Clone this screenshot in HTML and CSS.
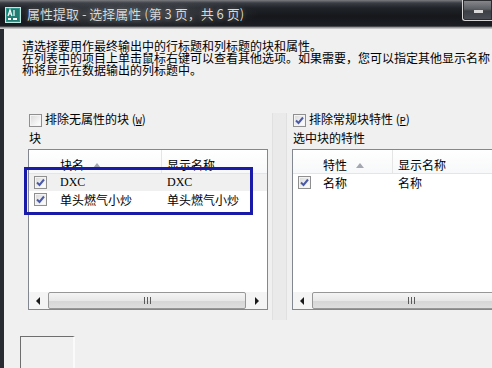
FILE: index.html
```html
<!DOCTYPE html>
<html lang="zh-CN">
<head>
<meta charset="utf-8">
<title>属性提取</title>
<link rel="stylesheet" href="styles.css">
</head>
<body>
<div class="window">
  <div class="titlebar">
    <svg class="app-icon" width="16" height="16" viewBox="0 0 16 16">
      <rect x="0.5" y="0.5" width="15" height="15" fill="#2e9a8e" stroke="#bfe9e3"/>
      <rect x="2" y="2" width="12" height="12" fill="#1f7d73"/>
      <path d="M3 9 L5 3 L7 9 M3.8 7 H6.2 M9 3 V9" stroke="#ffffff" stroke-width="1.2" fill="none"/>
      <rect x="3" y="11" width="3" height="2" fill="#ffffff"/>
      <rect x="8" y="11" width="4" height="2" fill="#ffffff"/>
    </svg>
    <span class="title">属性提取 - 选择属性 (第 3 页，共 6 页)</span>
    <div class="tb-btn"><span class="tb-glyph"></span></div>
  </div>
  <div class="client">
    <div class="intro">
      <div class="line">请选择要用作最终输出中的行标题和列标题的块和属性。</div>
      <div class="line">在列表中的项目上单击鼠标右键可以查看其他选项。如果需要，您可以指定其他显示名称</div>
      <div class="line">称将显示在数据输出的列标题中。</div>
    </div>

    <div class="panes">
      <div class="pane pane-left">
        <div class="chk-row"><span class="cb"></span><span>排除无属性的块 (<u class="acc">W</u>)</span></div>
        <div class="group-label">块</div>
        <div class="list list-left">
          <div class="list-head">
            <div class="hcol hcol-1">块名<span class="sort"></span></div>
            <div class="hcol hcol-2">显示名称</div>
          </div>
          <div class="list-body">
            <div class="row row-sel">
              <span class="cb checked"><svg width="11" height="11" viewBox="0 0 11 11"><path d="M2 5.5 L4.5 8 L9 2.5" stroke="#4a5aa8" stroke-width="2" fill="none"/></svg></span>
              <span class="cell cell-1 latin">DXC</span>
              <span class="cell latin">DXC</span>
            </div>
            <div class="row">
              <span class="cb checked"><svg width="11" height="11" viewBox="0 0 11 11"><path d="M2 5.5 L4.5 8 L9 2.5" stroke="#4a5aa8" stroke-width="2" fill="none"/></svg></span>
              <span class="cell cell-1">单头燃气小炒</span>
              <span class="cell">单头燃气小炒</span>
            </div>
          </div>
          <div class="hscroll">
            <div class="arrow-btn"><span class="tri-left"></span></div>
            <div class="thumb thumb-left"><span class="grip"></span></div>
            <div class="arrow-btn arrow-right"><span class="tri-right"></span></div>
          </div>
        </div>
        <div class="highlight"></div>
      </div>

      <div class="splitter"></div>

      <div class="pane pane-right">
        <div class="chk-row"><span class="cb checked"><svg width="11" height="11" viewBox="0 0 11 11"><path d="M2 5.5 L4.5 8 L9 2.5" stroke="#4a5aa8" stroke-width="2" fill="none"/></svg></span><span>排除常规块特性 (<u class="acc">P</u>)</span></div>
        <div class="group-label">选中块的特性</div>
        <div class="list list-right">
          <div class="list-head">
            <div class="hcol hcol-1">特性<span class="sort"></span></div>
            <div class="hcol hcol-2">显示名称</div>
          </div>
          <div class="list-body">
            <div class="row">
              <span class="cb checked"><svg width="11" height="11" viewBox="0 0 11 11"><path d="M2 5.5 L4.5 8 L9 2.5" stroke="#4a5aa8" stroke-width="2" fill="none"/></svg></span>
              <span class="cell cell-1">名称</span>
              <span class="cell">名称</span>
            </div>
          </div>
          <div class="hscroll">
            <div class="arrow-btn"><span class="tri-left"></span></div>
            <div class="thumb thumb-right"><span class="grip"></span></div>
          </div>
        </div>
      </div>
    </div>

    <div class="bottom">
      <div class="preview"></div>
    </div>
  </div>
</div>
</body>
</html>
```

FILE: styles.css
```css
* { box-sizing: border-box; }

html, body {
  margin: 0;
  padding: 0;
  width: 492px;
  height: 368px;
  overflow: hidden;
  background: #f0f0f0;
  font-family: "Noto Sans CJK SC", "Liberation Sans", sans-serif;
  font-size: 12px;
  color: #000;
}

.window {
  width: 492px;
  height: 368px;
  display: flex;
  flex-direction: column;
  overflow: hidden;
}

/* ---------- title bar ---------- */
.titlebar {
  height: 29px;
  flex: none;
  display: flex;
  align-items: flex-start;
  padding-left: 5px;
  background:
    radial-gradient(ellipse 130px 14px at 130px 14px, rgba(120,124,130,0.5), rgba(120,124,130,0) 100%),
    linear-gradient(#7a7c80 0px, #3a3d43 3px, #202328 8px, #15171b 16px, #1b1e23 26px, #c4c4c4 28px, #c4c4c4 29px);
}

.app-icon {
  margin-top: 7px;
  flex: none;
}

.title {
  margin-left: 6px;
  margin-top: 6px;
  font-size: 13px;
  line-height: 16px;
  color: #d9d9d9;
  white-space: nowrap;
  text-shadow: 0 0 4px rgba(255,255,255,0.35), 0 0 1px #000;
}

.tb-btn {
  margin-left: auto;
  width: 30px;
  height: 21px;
  flex: none;
  border: 1px solid #d6d6d6;
  border-right: none;
  border-top: none;
  border-radius: 0 0 0 3px;
  background: linear-gradient(#8a8c90, #5c5f64 45%, #3c3f45 55%, #4b4e54);
  box-shadow: inset 0 0 0 1px #2a2c30;
  display: flex;
  align-items: center;
  justify-content: center;
}

.tb-glyph {
  width: 9px;
  height: 3px;
  background: #d8d8d8;
  margin-left: 2px;
  margin-top: 3px;
}

/* ---------- client ---------- */
.client {
  flex: 1;
  border-left: 4px solid #282c32;
  background: #f0f0f0;
  display: flex;
  flex-direction: column;
}

.intro {
  margin-top: 11px;
  padding-left: 18px;
}

.line {
  height: 12px;
  line-height: 12px;
  white-space: nowrap;
}

.panes {
  margin-top: 37px;
  display: flex;
  align-items: flex-start;
}

.pane {
  position: relative;
  flex: none;
  display: flex;
  flex-direction: column;
}

.pane-left {
  margin-left: 24px;
  width: 240px;
}

.pane-right {
  width: 220px;
}

.splitter {
  flex: none;
  width: 24px;
  height: 207px;
  background:
    linear-gradient(90deg,
      transparent 0, transparent 4px,
      #e0e0e0 4px, #e0e0e0 5px,
      #eaeaea 5px, #eaeaea 18px,
      #e0e0e0 18px, #e0e0e0 19px,
      transparent 19px);
}

.chk-row {
  height: 14px;
  line-height: 14px;
  display: flex;
  align-items: center;
  gap: 3px;
  padding-left: 1px;
  white-space: nowrap;
}

.acc {
  font-family: "Liberation Mono", monospace;
  font-size: 10px;
}

.group-label {
  margin-top: 4px;
  height: 14px;
  line-height: 14px;
  padding-left: 1px;
  white-space: nowrap;
}

/* checkbox */
.cb {
  flex: none;
  width: 13px;
  height: 13px;
  border: 1px solid #8f8f8f;
  background: linear-gradient(135deg, #d8d8d8, #f6f6f6 70%, #ffffff);
  box-shadow: inset 0 0 0 1px #f4f4f4;
  display: flex;
  align-items: center;
  justify-content: center;
}

.cb svg { display: block; }

/* ---------- list view ---------- */
.list {
  margin-top: 4px;
  height: 161px;
  border: 1px solid #828790;
  background: #ffffff;
  display: flex;
  flex-direction: column;
  overflow: hidden;
}

.list-right { width: 220px; border-right: none; }

.list-head {
  height: 24px;
  flex: none;
  display: flex;
  border-bottom: 1px solid #e5e5e5;
  background: linear-gradient(#ffffff, #f7f8f9);
  white-space: nowrap;
}

.hcol {
  padding-top: 6px;
  line-height: 17px;
  display: flex;
  align-items: flex-start;
}

.list-left .hcol-1 { padding-left: 31px; width: 133px; border-right: 1px solid #e5e5e5; }
.list-left .hcol-2 { padding-left: 5px; }
.list-right .hcol-1 { padding-left: 30px; width: 100px; border-right: 1px solid #e5e5e5; }
.list-right .hcol-2 { padding-left: 5px; }

.sort {
  width: 0;
  height: 0;
  border-left: 4px solid transparent;
  border-right: 4px solid transparent;
  border-bottom: 5px solid #a3a8b0;
  margin-left: 9px;
  margin-top: 7px;
}

.list-body {
  flex: 1;
  display: flex;
  flex-direction: column;
}

.row {
  height: 17px;
  display: flex;
  align-items: center;
  padding-left: 5px;
  white-space: nowrap;
}

.row-sel { background: #f0f0f0; }

.list-left .row .cb { margin-right: 13px; }
.list-right .row .cb { margin-right: 12px; }

.cell { line-height: 17px; }
.list-left .cell-1 { width: 107px; }
.list-right .cell-1 { width: 75px; }

.latin {
  font-family: "Liberation Serif", serif;
  font-size: 12px;
}

/* horizontal scrollbar */
.hscroll {
  height: 17px;
  flex: none;
  display: flex;
  align-items: stretch;
  background: #f4f4f4;
}

.arrow-btn {
  width: 18px;
  flex: none;
  display: flex;
  align-items: center;
  justify-content: center;
}

.arrow-right { width: 20px; margin-left: auto; }

.tri-left {
  width: 0; height: 0;
  border-top: 4px solid transparent;
  border-bottom: 4px solid transparent;
  border-right: 4px solid #1a1a1a;
}

.tri-right {
  width: 0; height: 0;
  border-top: 4px solid transparent;
  border-bottom: 4px solid transparent;
  border-left: 4px solid #1a1a1a;
}

.thumb {
  margin: 0 1px;
  border: 1px solid #979797;
  border-radius: 2px;
  background: linear-gradient(#f4f4f4, #e8e8e8 50%, #d6d6d6 52%, #dedede);
  display: flex;
  align-items: center;
  justify-content: center;
}

.thumb-left { width: 198px; }
.thumb-right { width: 200px; }

.grip {
  width: 7px;
  height: 7px;
  background: repeating-linear-gradient(90deg, #5a5a5a 0, #5a5a5a 1px, transparent 1px, transparent 3px);
}

/* annotation rectangle drawn over the list */
.highlight {
  position: absolute;
  left: -4px;
  top: 54px;
  width: 229px;
  height: 48px;
  border: 3px solid #1a1aa8;
  pointer-events: none;
}

/* ---------- bottom ---------- */
.bottom {
  margin-top: 16px;
  flex: 1;
  display: flex;
}

.preview {
  margin-left: 16px;
  width: 55px;
  height: 50px;
  border-top: 1px solid #6e6e6e;
  border-left: 1px solid #6e6e6e;
  border-right: 2px solid #fafafa;
  background: #f0f0f0;
}
```
